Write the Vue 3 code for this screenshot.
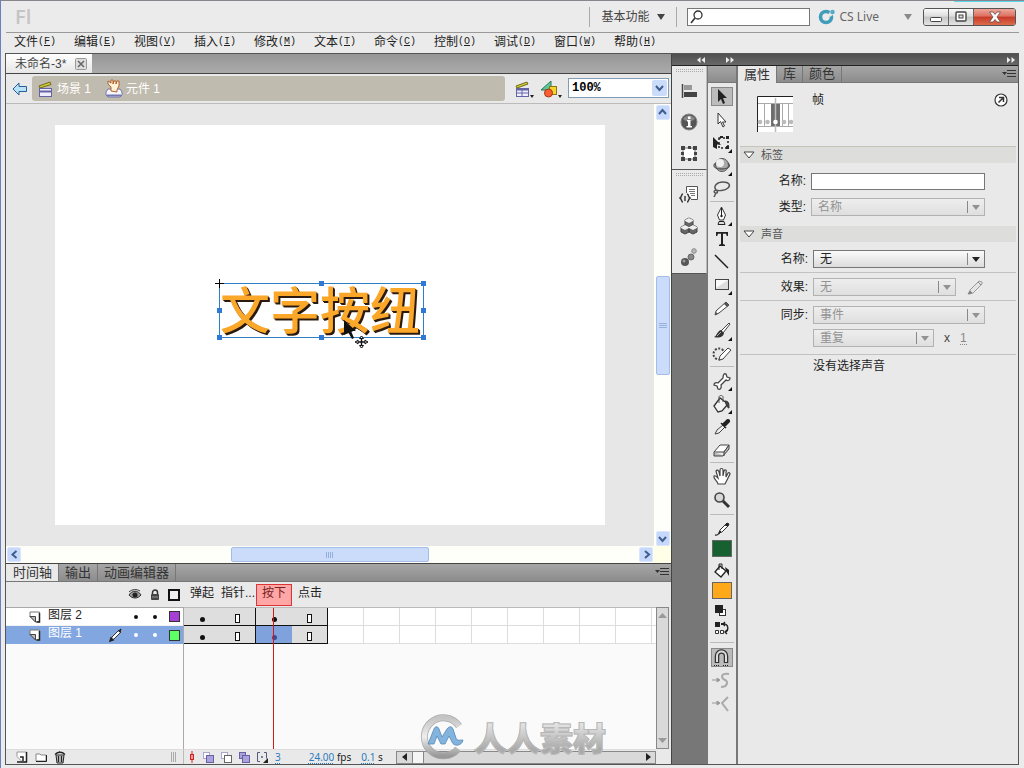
<script setup>
import { ref } from 'vue'

const menus = [
  ['文件', 'F'], ['编辑', 'E'], ['视图', 'V'], ['插入', 'I'], ['修改', 'M'], ['文本', 'T'],
  ['命令', 'C'], ['控制', 'O'], ['调试', 'D'], ['窗口', 'W'], ['帮助', 'H'],
]
const layers = ref([
  { name: '图层 2', color: '#a63fd6', selected: false },
  { name: '图层 1', color: '#5dff66', selected: true },
])
const states = ['弹起', '指针...', '按下', '点击']
const activeState = 2
const frameKinds = ['key', 'end', 'key', 'end']
const handles = ['tm', 'tr', 'ml', 'mr', 'bl', 'bm', 'br']
const query = ref('')
const frameLabel = ref('')
</script>

<template>
  <div class="window">
    <header class="titlebar">
      <span class="logo">Fl</span>
      <button class="workspace-btn">基本功能<svg width="8" height="6"><path d="M0 0h8L4 6z" fill="#444" /></svg></button>
      <label class="search">
        <svg width="14" height="14"><circle cx="8" cy="5" r="4" fill="none" stroke="#333" stroke-width="1.3" /><path d="M5 8L1 13" stroke="#333" stroke-width="1.6" /></svg>
        <input v-model="query" type="text" aria-label="搜索">
      </label>
      <button class="cslive">
        <svg width="18" height="18"><circle cx="8" cy="9" r="5.5" fill="none" stroke="#3f9dbb" stroke-width="3.6" /><path d="M10 7l3-5 3 4-4 3z" fill="#e9e9e9" /><circle cx="14.500" cy="4" r="2.300" fill="#5aaac4" /></svg>
        <span>CS Live</span>
        <svg width="8" height="6"><path d="M0 0h8L4 6z" fill="#8a8a8a" /></svg>
      </button>
      <div class="winbtns">
        <button aria-label="最小化"><svg width="14" height="12"><rect x="1.5" y="6.500" width="11" height="4" rx="1" fill="#fff" stroke="#444" /></svg></button>
        <button aria-label="还原"><svg width="14" height="12"><rect x="2" y="1" width="10" height="9" rx="1" fill="#fff" stroke="#444" stroke-width="1.4" /><rect x="5" y="4" width="4" height="3" fill="#ddd" stroke="#444" /></svg></button>
        <button class="close" aria-label="关闭"><svg width="14" height="12"><path d="M1.500 1h3.500l2 2.500L9 1h3.500L9 6l3.500 5H9L7 8.500 5 11H1.500L5 6z" fill="#fff" stroke="#6b4a4a" stroke-width=".8" /></svg></button>
      </div>
    </header>

    <nav class="menubar">
      <button v-for="[name, key] in menus" :key="key">{{ name }}<span class="key">(<u>{{ key }}</u>)</span></button>
    </nav>

    <div class="workspace">
      <main class="editor">
        <div class="doc-tabs">
          <div class="doc-tab">未命名-3*<button class="tab-close" aria-label="关闭文档"><svg width="12" height="12"><rect x=".5" y=".5" width="11" height="11" rx="1" fill="#ddd" stroke="#999" /><path d="M3 3l6 6M9 3l-6 6" stroke="#666" stroke-width="1.500" /></svg></button></div>
        </div>

        <div class="editbar">
          <button class="back" aria-label="返回"><svg width="16" height="14"><path d="M1 7l6-6v3.500h7.500v5H7V13z" fill="#b8e2f8" stroke="#245f96" /></svg></button>
          <div class="crumbs">
            <button>
              <svg width="16" height="18"><rect x="1.500" y="8.500" width="12" height="8" fill="#eef" stroke="#6464a4" /><path d="M1 11.500h13" stroke="#6464a4" stroke-width="2" /><path d="M1 6l11-4 1 2.500L2 8z" fill="#d3cc3c" stroke="#6d6b18" /></svg>
              场景 1
            </button>
            <button>
              <svg width="18" height="19"><path d="M3 10h12l2 3v3l-2 2H3l-2-2v-3z" fill="#f5f7ff" stroke="#7777b0" /><path d="M2 16.500h14" stroke="#7777b0" stroke-width="2" /><path d="M6 12V8L3 5V2l3 2V1h2v4l1-3h2v3l1-3h2v5l-2 4v2z" fill="#fff0d8" stroke="#b0622c" /></svg>
              元件 1
            </button>
          </div>
          <button class="pick" aria-label="编辑场景"><svg width="20" height="18"><rect x="2.500" y="8.500" width="12" height="8" fill="#eef" stroke="#6464a4" /><path d="M2 9.500h13" stroke="#6464a4" stroke-width="2" /><path d="M3 13h11M8 10v6" stroke="#6464a4" /><path d="M2 6l11-4 1 2L3 8z" fill="#d3cc3c" stroke="#6d6b18" /><path d="M16 15h4l-2 3z" fill="#222" /></svg></button>
          <button class="pick" aria-label="编辑元件"><svg width="22" height="18"><path d="M1 10L11 1v9z" fill="#5cc79a" stroke="#26775a" /><rect x="9.500" y="6.500" width="7" height="8" fill="#f5d42e" stroke="#927511" /><circle cx="8.500" cy="13" r="4" fill="#fa5f32" stroke="#a33a18" /><path d="M18 15h4l-2 3z" fill="#222" /></svg></button>
          <div class="zoom">
            <select aria-label="缩放比例"><option>100%</option></select>
            <svg width="15" height="16"><rect width="15" height="16" rx="2" fill="#cbdcfb" /><path d="M4 6l3.500 4L11 6" fill="none" stroke="#3f5d8c" stroke-width="2" /></svg>
          </div>
        </div>

        <section class="stage-area">
          <div class="pasteboard">
            <div class="canvas">
              <div class="text-object">
                文字按纽
                <i v-for="h in handles" :key="h" :class="['handle', h]"></i>
                <svg class="origin" width="9" height="9"><path d="M4.500 0v9M0 4.500h9" stroke="#000" /></svg>
                <svg class="pointer" width="24" height="29"><path d="M0 0v15l4-3 4 7 2-1-3-7h5z" fill="#111" /><path d="M17.500 16v12M11 22h13" stroke="#111" stroke-width="1.400" /><path d="M15.500 18.500l2-2.500 2 2.500zM15.500 25.500l2 2.500 2-2.500zM14 20l-2.500 2 2.500 2zM21 20l2.500 2-2.500 2z" fill="#fff" stroke="#111" /></svg>
              </div>
            </div>
          </div>
          <div class="xp-scroll vertical">
            <button aria-label="向上"><svg width="13" height="15"><path d="M3 9l3.500-4L10 9" /></svg></button>
            <div class="track"><div class="thumb"></div></div>
            <button aria-label="向下"><svg width="13" height="15"><path d="M3 6l3.500 4L10 6" /></svg></button>
          </div>
          <div class="xp-scroll horizontal">
            <button aria-label="向左"><svg width="13" height="15"><path d="M8.500 4L4.500 7.500l4 3.500" /></svg></button>
            <div class="track"><div class="thumb"></div></div>
            <button aria-label="向右"><svg width="13" height="15"><path d="M5 4l4 3.500L5 11" /></svg></button>
          </div>
          <div class="corner"></div>
        </section>

        <section class="timeline">
          <div class="panel-tabs">
            <button class="active">时间轴</button><button>输出</button><button>动画编辑器</button>
            <svg class="panel-menu" width="14" height="8"><path d="M0 2h5L2.500 5z" fill="#333" /><path d="M5 .5h9M5 3.500h9M5 6.500h9" stroke="#333" /></svg>
          </div>
          <div class="tl-grid">
            <div class="layer-head">
              <svg width="14" height="12"><path d="M1 6c3-5 9-5 12 0-3 4-9 4-12 0z" fill="#999" stroke="#333" /><circle cx="7" cy="6" r="2.500" fill="#222" /><path d="M1 3c3-3 8-3 11-1" fill="none" stroke="#333" /></svg>
              <svg width="10" height="12"><path d="M2.500 6V3.500a2.500 2.500 0 015 0V6" fill="none" stroke="#333" stroke-width="1.500" /><rect x="1" y="5" width="8" height="6" rx="1" fill="#444" /><path d="M2 8h6" stroke="#999" /></svg>
              <svg width="12" height="12"><rect x="1" y="1" width="10" height="10" fill="#eee" stroke="#111" stroke-width="2" /></svg>
            </div>
            <div class="state-head">
              <span v-for="(s, i) in states" :key="s" :class="{ current: i === activeState }">{{ s }}</span>
            </div>
            <div class="layers">
              <div v-for="l in layers" :key="l.name" :class="['layer', { selected: l.selected }]">
                <svg width="12" height="12"><path d="M1 1h9.500v10H6.500L1 5.500z" fill="#fff" stroke="#777" /><path d="M1 5.500h5.500V11z" fill="#bbb" stroke="#444" /><path d="M10.500 2v9h-3" stroke="#222" stroke-width="1.500" fill="none" /></svg>
                <span class="layer-name">{{ l.name }}</span>
                <svg class="layer-pencil" width="14" height="14"><g v-if="l.selected"><path d="M2 12l1-3 7-7 2 2-7 7z" fill="#fff" stroke="#333" /><path d="M1 13l3-1-2-2zM10 4l2-3" stroke="#222" fill="#222" stroke-width="1.500" /></g></svg>
                <i class="dot"></i><i class="dot"></i>
                <i class="chip" :style="{ background: l.color }"></i>
              </div>
            </div>
            <div class="frames">
              <div v-for="l in layers" :key="l.name" class="frame-row">
                <div v-for="(k, i) in frameKinds" :key="i" :class="['frame', k, { hot: l.selected && i === activeState }]"><i></i></div>
                <div class="empty-frames"></div>
              </div>
              <div class="playhead"></div>
            </div>
            <div class="gray-scroll v">
              <svg width="9" height="6"><path d="M0 6h9L4.500 1z" fill="#999" /></svg>
              <svg width="9" height="6"><path d="M0 0h9L4.500 5z" fill="#999" /></svg>
            </div>
            <div class="layer-foot">
              <button aria-label="新建图层"><svg width="12" height="12"><path d="M1 1h9.500v10H6.500L1 5.500z" fill="#fff" stroke="#999" /><path d="M4 6h3v4M10.500 1v10H1" fill="none" stroke="#222" stroke-width="1.500" /></svg></button>
              <button aria-label="新建文件夹"><svg width="12" height="12"><path d="M1 3h4l1 1h5v6H1z" fill="#fff" stroke="#888" /><path d="M1 10.500h10.500V4" fill="none" stroke="#222" /></svg></button>
              <button aria-label="删除"><svg width="12" height="13"><path d="M2 4h8l-1 8H3z" fill="#ccc" stroke="#222" /><path d="M1 3.500c3-3 7-3 10 0M4.500 5v6M7.500 5v6M4 2l2-1" fill="none" stroke="#222" stroke-width="1.300" /></svg></button>
              <svg class="foot-grip" width="6" height="10"><path d="M.5 0v10M2.500 0v10M4.500 0v10" stroke="#aaa" /></svg>
            </div>
            <div class="frame-foot">
              <svg width="8" height="12"><path d="M4 0v12" stroke="#d22" /><rect x="2.500" y="3.500" width="3" height="5" fill="#f99" stroke="#c22" /></svg>
              <svg width="11" height="11"><rect x=".5" y=".5" width="6" height="6" fill="#fff" stroke="#aaa6cc" /><rect x="3.500" y="3.500" width="7" height="7" fill="#aaa2da" stroke="#6862a4" /></svg>
              <svg width="11" height="11"><rect x=".5" y=".5" width="6" height="6" fill="#fff" stroke="#aaa6cc" /><rect x="3.500" y="3.500" width="7" height="7" fill="#fff" stroke="#666" /></svg>
              <svg width="11" height="11"><rect x=".5" y=".5" width="6" height="6" fill="#aaa2da" stroke="#6862a4" /><rect x="3.500" y="3.500" width="7" height="7" fill="#aaa2da" stroke="#6862a4" /></svg>
              <svg width="11" height="11"><path d="M3 .5H.5v9H3M7 .5h2.500v6" fill="none" stroke="#555a80" /><circle cx="5" cy="5" r="1" fill="#555a80" /><path d="M6 11h5V6z" fill="#222" /></svg>
              <a class="fno" href="#">3</a>
              <span class="fps"><a href="#">24.00</a> fps</span>
              <span class="secs"><a href="#">0.1</a> s</span>
              <div class="gray-scroll h">
                <button aria-label="左"><svg width="5" height="8"><path d="M5 0v8L0 4z" fill="#222" /></svg></button>
                <i></i>
                <svg width="5" height="8"><path d="M0 0v8l5-4z" fill="#222" /></svg>
              </div>
            </div>
          </div>
          <div class="watermark">
            <svg width="46" height="46">
              <defs><linearGradient id="ring" x2="0" y2="1"><stop stop-color="#c4c4c4" /><stop offset=".5" stop-color="#eee" /><stop offset="1" stop-color="#999" /></linearGradient></defs>
              <path d="M39 12A19 19 0 1 0 38 35" fill="none" stroke="#aaa" stroke-width="7" /><path d="M39 12A19 19 0 1 0 38 35" fill="none" stroke="url(#ring)" stroke-width="5.500" />
              <path d="M8 30l6-15c1-3 4-3 5 0l3 8 5-8c2-3 5-3 6 0l3 9c1 3 4 2 7 2-1 6-9 7-11 2l-3-6-4 8h-4l-4-8-3 8z" fill="#82b4de" stroke="#5688b6" stroke-width=".8" />
            </svg>
            <span>人人素材</span>
          </div>
        </section>
      </main>

      <aside class="dock">
        <div class="dock-head">
          <svg width="8" height="6"><path d="M3.500 0v6L0 3zM8 0v6L4.500 3z" fill="#eee" /></svg>
          <svg width="8" height="6"><path d="M0 0v6l3.500-3zM4.500 0v6L8 3z" fill="#eee" /></svg>
          <svg width="8" height="6"><path d="M0 0v6l3.500-3zM4.500 0v6L8 3z" fill="#eee" /></svg>
        </div>
        <div class="dock-body">
          <div class="icon-panels">
            <div class="icon-group">
              <i class="gripper"></i>
              <button aria-label="对齐"><svg width="18" height="18"><path d="M2.500 2v14" stroke="#444" stroke-width="1.500" /><rect x="4" y="3" width="8" height="5" fill="#999" /><rect x="4" y="10" width="13" height="5" fill="#444" /></svg></button>
              <button aria-label="信息"><svg width="18" height="18"><circle cx="9" cy="9" r="8" fill="#555" stroke="#888" /><path d="M3 6a7 7 0 0112 0c-3 3-9 3-12 0z" fill="#888" /><path d="M7 7h3.500v6H12v1.500H6.500V13H8V8.500H7zM8 3.500h2.500V6H8z" fill="#fff" /></svg></button>
              <button aria-label="变形"><svg width="18" height="18"><rect x="3" y="4" width="12" height="11" fill="#fff" stroke="#777" /><path d="M1 2h4v4H1zM13 2h4v4h-4zM1 13h4v4H1zM13 13h4v4h-4zM8 2h3v3H8zM8 14h3v3H8zM1 8h3v3H1zM14 8h3v3h-3z" fill="#444" /></svg></button>
            </div>
            <div class="icon-group">
              <i class="gripper"></i>
              <button aria-label="代码片断"><svg width="20" height="20"><path d="M7.500 8V1.500h11v13H12" fill="#fff" stroke="#555" /><path d="M10 4.500h6M10 6.500h6M11 8.500h5M12 10.500h4" stroke="#777" /><path d="M4 9c-2 0-1 3-3 4 2 1 1 4 3 4M8 9c2 0 1 3 3 4-2 1-1 4-3 4M6 11v5" fill="none" stroke="#333" stroke-width="1.400" /></svg></button>
              <button aria-label="组件"><svg width="20" height="20"><path d="M6 4l4-2 4 2v5l-4 2-4-2zM2 11l4-2 4 2v5l-4 2-4-2zM10 11l4-2 4 2v5l-4 2-4-2z" fill="#666" stroke="#444" /><path d="M6 4l4-2 4 2v1l-4 2-4-2zM2 11l4-2 4 2v1l-4 2-4-2zM10 11l4-2 4 2v1l-4 2-4-2z" fill="#eee" /></svg></button>
              <button aria-label="动画预设"><svg width="18" height="18"><circle cx="5" cy="14" r="4" fill="#555" /><circle cx="11" cy="9" r="3" fill="#888" stroke="#666" /><circle cx="14" cy="3" r="2.300" fill="#bbb" stroke="#888" /><circle cx="4" cy="13" r="1.500" fill="#999" /></svg></button>
            </div>
          </div>

          <div class="tools">
            <div class="tools-cap"></div>
            <div class="tool-group">
              <button class="on" aria-label="选择"><svg viewBox="0 0 22 20"><path d="M7 2v13l3-3 2 5 2-1-2-5h4z" fill="#222" /></svg></button>
              <button aria-label="部分选取"><svg viewBox="0 0 22 20"><path d="M7 3v11l2.500-2.500L12 17l1.500-1-2-4H15z" fill="#fff" stroke="#333" /></svg></button>
              <button aria-label="任意变形"><svg viewBox="0 0 22 20"><path d="M2 4l8 8-4-.5V16l-4-2z" fill="#222" /><path d="M8 5h9v10H8z" fill="none" stroke="#222" stroke-width="1.500" stroke-dasharray="2 2" /><path d="M15 3h3v3h-3zM15 13h3v3h-3zM9 3h3v2H9z" fill="#222" /><path d="M21 16v4h-4z" fill="#111" /></svg></button>
              <button aria-label="3D 旋转"><svg viewBox="0 0 22 20"><circle cx="11" cy="9" r="6.500" fill="#aaa" stroke="#555" /><circle cx="9" cy="7" r="4" fill="#f0f0f0" /><path d="M5 7c-4 2-2 6 5 6 8 0 10-3 7-6" fill="none" stroke="#555" stroke-width="1.300" /><path d="M21 16v4h-4z" fill="#111" /></svg></button>
              <button aria-label="套索"><svg viewBox="0 0 22 20"><path d="M5 11C2 7 6 3 12 3s8 3 5 6-10 3-12 2c-3 1-2 3 0 3s2-2 0-3M5 14l-2 4" fill="none" stroke="#555" stroke-width="1.500" /></svg></button>
            </div>
            <div class="tool-group">
              <button aria-label="钢笔"><svg viewBox="0 0 22 20"><path d="M10.500 1l4 8-2 5h-4l-2-5z" fill="#fff" stroke="#333" /><path d="M10.500 2v8" stroke="#222" /><circle cx="10.500" cy="10" r="1.200" fill="#222" /><path d="M8 15.500h5l1 3H7z" fill="#ddd" stroke="#222" /><path d="M21 16v4h-4z" fill="#111" /></svg></button>
              <button aria-label="文本"><svg viewBox="0 0 22 20"><path d="M5 3h12v4h-1.200L15 4.800h-3V15l2 .8V17H8v-1.200l2-.8V4.800H7L6.200 7H5z" fill="#222" /></svg></button>
              <button aria-label="线条"><svg viewBox="0 0 22 20"><path d="M4 3l13 13" stroke="#222" stroke-width="1.500" /></svg></button>
              <button aria-label="矩形"><svg viewBox="0 0 22 20"><rect x="4.500" y="4.500" width="13" height="10" fill="#ddd" stroke="#444" /><path d="M5 5h12L5 13z" fill="#fafafa" /><path d="M21 16v4h-4z" fill="#111" /></svg></button>
              <button aria-label="铅笔"><svg viewBox="0 0 22 20"><path d="M4 17l1-4L15 4l3 3-10 8z" fill="#fff" stroke="#444" /><path d="M4 17l3-1-2-2zM13 6l3 3 2-2-3-3z" fill="#555" /></svg></button>
              <button aria-label="刷子"><svg viewBox="0 0 22 20"><path d="M18 2l-8 8 2 2 7-9z" fill="#fff" stroke="#444" /><path d="M10 9l3 3c-1 5-6 5-10 4 3-1 3-6 7-7z" fill="#333" /><path d="M6 15l4-4" stroke="#aaa" /><path d="M21 16v4h-4z" fill="#111" /></svg></button>
              <button aria-label="Deco"><svg viewBox="0 0 22 20"><circle cx="8" cy="10" r="5.500" fill="none" stroke="#444" stroke-width="2" stroke-dasharray="2 1.500" /><path d="M8 16l1-4 8-8 3 2-8 9z" fill="#fff" stroke="#444" /></svg></button>
            </div>
            <div class="tool-group">
              <button aria-label="骨骼"><svg viewBox="0 0 22 20"><path d="M12 7c0-3 1-5 3-4l1 3 3 1c0 3-3 3-4 2l-5 5c1 3-1 5-3 4l-1-3-3-1c0-2 2-3 4-2z" fill="#fff" stroke="#444" stroke-width="1.300" /><path d="M21 16v4h-4z" fill="#111" /></svg></button>
              <button aria-label="颜料桶"><svg viewBox="0 0 22 20"><path d="M3 12l6-8 8 6-6 7-4 1z" fill="#f2f2f2" stroke="#333" stroke-width="1.300" /><path d="M8 9V3c0-2 4-2 4 0v5" fill="none" stroke="#555" /><path d="M14 7c4 0 4 3 4 7-2 0-3-4-4-7z" fill="#444" stroke="#333" /><path d="M21 16v4h-4z" fill="#111" /></svg></button>
              <button aria-label="滴管"><svg viewBox="0 0 22 20"><path d="M4 17l2-4 6-5 2 2-6 6z" fill="#eee" stroke="#444" /><path d="M10 6l5 5M12 7l4-4c2-1 3 1 2 2l-4 4z" fill="#222" stroke="#222" stroke-width="1.500" /></svg></button>
              <button aria-label="橡皮擦"><svg viewBox="0 0 22 20"><path d="M3 12l6-7h9l-5 7z" fill="#fff" stroke="#444" /><path d="M3 12v4h9l6-7V5l-5 7v4" fill="#bbb" stroke="#444" /></svg></button>
            </div>
            <div class="tool-group wide">
              <button aria-label="手形"><svg viewBox="0 0 22 20"><path d="M7 17c0-3-5-5-4-8 1-1 3 1 4 2L5 4c1-2 3 0 3 1l1 4V3c0-2 3-2 3 0v6l1-5c1-2 3-1 2 1v5l2-4c1-1 2 0 2 1l-3 6-2 4z" fill="#fff" stroke="#444" stroke-width="1.200" /></svg></button>
              <button aria-label="缩放"><svg viewBox="0 0 22 20"><circle cx="8.500" cy="7.500" r="4.500" fill="#d8d8d8" stroke="#444" stroke-width="1.600" /><path d="M12 11l6 6" stroke="#333" stroke-width="3" /></svg></button>
            </div>
            <div class="tool-group colors">
              <button aria-label="笔触颜色"><svg viewBox="0 0 22 20"><path d="M4 16c4 1 3-2 5-2" fill="none" stroke="#333" stroke-width="1.300" /><path d="M8 14l1-3 6-6 2 2-6 6z" fill="#fff" stroke="#333" /><path d="M8 14l2-1-1-1zM14 6l2-2 2 1-1 2z" fill="#222" stroke="#222" /></svg></button>
              <button class="swatch green" aria-label="笔触"></button>
              <button aria-label="填充颜色"><svg viewBox="0 0 22 20"><path d="M4 11l5-6 6 5-5 6z" fill="#fff" stroke="#222" stroke-width="1.300" /><path d="M8 9V3h3v5" fill="none" stroke="#222" /><path d="M14 6l4 3v6l-3-5z" fill="#222" /></svg></button>
              <button class="swatch orange" aria-label="填充"></button>
              <button class="short" aria-label="黑白"><svg viewBox="0 0 22 20"><rect x="8.500" y="8.500" width="6" height="6" fill="#fff" stroke="#333" /><path d="M4 4h8v8H4z" fill="#222" /></svg></button>
              <button class="short" aria-label="交换颜色"><svg viewBox="0 0 22 20"><path d="M4 3h5v5H4zM10 4h2v2h-2z" fill="#222" /><path d="M4.500 11.500h3v3h-3zM9.500 11.500h3v3h-3z" fill="#fff" stroke="#333" /><path d="M12 5c6-1 6 7 2 8M14 3l-2 2 2 2M16 11l-2 2 2 2" fill="none" stroke="#222" stroke-width="1.400" /></svg></button>
            </div>
            <div class="tool-group last">
              <button class="on" aria-label="贴紧至对象"><svg viewBox="0 0 22 20"><path d="M6 15V8c0-6 9-6 9 0v7" fill="none" stroke="#333" stroke-width="4.500" /><path d="M6 14V8c0-6 9-6 9 0v6" fill="none" stroke="#ddd" stroke-width="2" /><path d="M3 17.500h6M12 17.500h6" stroke="#222" stroke-dasharray="1 1" /></svg></button>
              <button aria-label="平滑"><svg viewBox="0 0 22 20"><path d="M1 9h6M6 7l3 2-3 2z" fill="#999" stroke="#999" /><path d="M18 3c-9-1-8 4-4 6s2 7-4 7" fill="none" stroke="#aaa" stroke-width="2" /></svg></button>
              <button aria-label="伸直"><svg viewBox="0 0 22 20"><path d="M1 9h6M6 7l3 2-3 2z" fill="#999" stroke="#999" /><path d="M17 3l-6 6 6 8" fill="none" stroke="#aaa" stroke-width="2" /></svg></button>
            </div>
          </div>

          <div class="props">
            <div class="panel-tabs">
              <button class="active">属性</button><button>库</button><button>颜色</button>
              <svg class="panel-menu" width="14" height="8"><path d="M0 2h5L2.500 5z" fill="#333" /><path d="M5 .5h9M5 3.500h9M5 6.500h9" stroke="#333" /></svg>
            </div>
            <div class="prop-head">
              <svg width="36" height="36"><rect width="36" height="36" fill="#fff" /><path d="M.5 36V.5H36" fill="none" stroke="#222" /><path d="M1 7.500h35M1 30.500h35M7.500 8v22M25.500 8v22M31.500 8v22" stroke="#aaa" /><rect x="14" y="8" width="9" height="22" fill="#6e6e6e" /><path d="M18.500 2v34" stroke="#bbb" stroke-width="1.500" /><g fill="#bbb"><circle cx="3" cy="26" r="2.300" /><circle cx="10.500" cy="26" r="2.300" /><circle cx="27" cy="26" r="2.300" /><circle cx="34" cy="26" r="2.300" /></g><circle cx="18.500" cy="26" r="2.300" fill="#fff" /></svg>
              <h2>帧</h2>
              <button class="help" aria-label="帮助"><svg width="14" height="14"><circle cx="7" cy="7" r="6" fill="#fff" stroke="#333" stroke-width="1.200" /><path d="M4.500 9.500L9 5M5 4.500h4.500V9" fill="none" stroke="#333" stroke-width="1.500" /></svg></button>
            </div>
            <h3 class="ruled"><svg width="12" height="8"><path d="M1 1h10L6 7z" fill="#fff" stroke="#444" /></svg>标签</h3>
            <div class="fields">
              <div class="field"><label for="lname">名称:</label><input id="lname" v-model="frameLabel" type="text"></div>
              <div class="field"><label for="ltype">类型:</label><div class="combo off"><select id="ltype" disabled><option>名称</option></select></div></div>
            </div>
            <h3><svg width="12" height="8"><path d="M1 1h10L6 7z" fill="#fff" stroke="#444" /></svg>声音</h3>
            <div class="sound">
              <div class="field first"><label for="sname">名称:</label><div class="combo"><select id="sname"><option>无</option></select></div></div>
              <div class="field"><label for="effect">效果:</label><div class="combo off medium"><select id="effect" disabled><option>无</option></select></div>
                <svg class="edit" width="16" height="16"><path d="M2 15l1-4L12 2l3 1v2l-9 9z" fill="#e4e4e4" stroke="#999" /><path d="M1 15l4-1-2-2zM11 3l3 3" fill="#777" stroke="#888" /></svg></div>
              <div class="sync">
                <div class="field"><label for="sync">同步:</label><div class="combo off"><select id="sync" disabled><option>事件</option></select></div></div>
                <div class="field"><span class="blank"></span><div class="combo off small"><select aria-label="循环" disabled><option>重复</option></select></div><span class="times">x</span><span class="count">1</span></div>
              </div>
              <p>没有选择声音</p>
            </div>
          </div>
        </div>
      </aside>
    </div>
  </div>
</template>

<style>
body { background: #e9e9e9; }
</style>

<style scoped>
* { box-sizing: border-box; }
button { appearance: none; border: 0; background: none; padding: 0; margin: 0; font: inherit; color: inherit; display: flex; align-items: center; justify-content: center; white-space: nowrap; }
svg { display: block; flex: none; }
h2, h3, p { margin: 0; font-weight: normal; }
i { display: block; }
.window { position: relative; height: 100vh; min-height: 760px; display: flex; flex-direction: column; padding: 0 5px 3px; border-top: 1px solid #88868c; border-left: 1px solid #6a7ec0; background: #ebebeb; color: #222; font: 12px/16px "Liberation Sans", "Noto Sans CJK SC", sans-serif; overflow: hidden; }
.window::after { content: ""; position: absolute; top: 0; right: 0; width: 70px; height: 1px; background: #5cd4ea; }

.titlebar { display: flex; align-items: center; height: 32px; border-bottom: 1px solid #999; padding-right: 3px; }
.logo { flex: 1; padding-left: 9px; font: 600 20px/20px "Open Sans", sans-serif; color: #c4c4c4; }
.workspace-btn { height: 20px; border: solid #aaa; border-width: 0 1px; width: 88px; gap: 8px; color: #444; }
.search { display: flex; align-items: center; margin-left: 10px; width: 123px; height: 18px; padding: 0 2px; border: 1px solid #777; background: #fff; }
.search input { flex: 1; min-width: 0; border: 0; outline: 0; background: none; }
.cslive { margin-left: 8px; gap: 3px; font-family: "Noto Sans", sans-serif; color: #666; }
.cslive svg:last-child { margin-left: 22px; }
.winbtns { display: flex; height: 18px; margin-left: 11px; border: 1px solid #555; border-radius: 3px; overflow: hidden; }
.winbtns button { width: 25px; background: linear-gradient(#fafafa, #ddd 45%, #c4c4c4 50%, #e4e4e4); border-right: 1px solid #666; }
.winbtns button.close { width: 41px; border: 0; background: linear-gradient(#eda79b, #dc6f60 45%, #c73a28 50%, #dc6c4a); }

.menubar { display: flex; gap: 18px; height: 20px; padding-left: 8px; }
.menubar .key { font: 10px/16px "Liberation Mono", monospace; }
.menubar button { width: 42px; height: 17px; }

.workspace { flex: 1; min-height: 0; display: flex; border: 1px solid #555; margin-left: -1px; }
.editor { flex: 1; min-width: 0; display: flex; flex-direction: column; background: #e9e9e9; }
.doc-tabs { display: flex; height: 20px; background: linear-gradient(#969696, #ababab); border-bottom: 1px solid #444; }
.doc-tab { display: flex; align-items: center; gap: 4px; width: 86px; padding-left: 9px; background: linear-gradient(#fff, #e6e6e6); color: #444; }
.doc-tab .tab-close { margin-left: auto; margin-right: 5px; }

.editbar { display: flex; align-items: center; height: 30px; padding: 0 2px 0 6px; border-bottom: 1px solid #bbb; }
.crumbs { flex: 1; display: flex; gap: 14px; margin: 0 9px 0 4px; padding-left: 6px; height: 25px; border-radius: 3px; background: #bfbbae; color: #fff; }
.crumbs button { gap: 3px; }
.pick { margin-right: 6px; }
.zoom { position: relative; width: 101px; height: 20px; margin-bottom: 2px; }
.zoom select { appearance: none; width: 100%; height: 100%; padding: 0 3px; border: 1px solid #7f9db9; border-radius: 0; background: #fff; font: bold 12px/16px "Liberation Mono", monospace; color: #000; }
.zoom svg { position: absolute; right: 2px; top: 2px; pointer-events: none; }

.stage-area { flex: 1; min-height: 0; display: grid; grid-template: minmax(0, 1fr) 17px / minmax(0, 1fr) 17px; background: #e7e7e7; }
.pasteboard { display: flex; align-items: center; justify-content: center; overflow: hidden; }
.canvas { position: relative; flex: none; width: 550px; height: 400px; background: #fff; }
.text-object { position: absolute; left: 164px; top: 158px; width: 205px; height: 55px; border: 1px solid #2f7fc4; white-space: nowrap; font: 500 50px/46px "Noto Sans CJK SC", sans-serif; color: #fba82a; text-shadow: 1px 1px #2a1a10, 2px 2px #2a1a10; }
.handle { position: absolute; width: 5px; height: 5px; background: #2f78d4; }
.handle.tm, .handle.tr { top: -3px; }
.handle.tm, .handle.bm { left: 99px; }
.handle.tr, .handle.mr, .handle.br { right: -3px; }
.handle.ml, .handle.bl { left: -3px; }
.handle.ml, .handle.mr { top: 24px; }
.handle.bl, .handle.bm, .handle.br { bottom: -3px; }
.origin { position: absolute; left: -5px; top: -5px; }
.pointer { position: absolute; left: 124px; top: 36px; overflow: visible; }
.xp-scroll { display: flex; background: #fffffa; }
.xp-scroll.vertical { flex-direction: column; align-items: center; padding: 1px 1px 0; }
.xp-scroll.horizontal { align-items: center; padding: 0 1px; }
.xp-scroll button { width: 14px; height: 15px; border: 1px solid #dbe6fb; border-radius: 2px; background: #c6d8fb; }
.xp-scroll path { fill: none; stroke: #3f5d8c; stroke-width: 2; }
.track { flex: 1; display: flex; align-items: center; justify-content: center; }
.vertical .track { flex-direction: column; width: 100%; min-height: 0; }
.thumb { border: 1px solid #a3bce8; border-radius: 2px; background: #cbdcfb; display: flex; align-items: center; justify-content: center; }
.horizontal .thumb { width: 32%; height: 15px; }
.vertical .thumb { width: 14px; height: 24%; }
.thumb::after { content: ""; width: 8px; height: 6px; background: repeating-linear-gradient(90deg, #96b0de 0 1px, transparent 1px 2px); }
.vertical .thumb::after { background: repeating-linear-gradient(#96b0de 0 1px, transparent 1px 2px); }
.corner { background: #fffee6; }

.panel-tabs { display: flex; height: 17px; background: linear-gradient(#a6a6a6, #8c8c8c); border-bottom: 1px solid #777; font-size: 13px; color: #333; }
.panel-tabs button { padding: 0 6px; border-right: 1px solid #777; }
.panel-tabs .active { background: #e9e9e9; height: 17px; }
.panel-menu { margin: 4px 2px 0 auto; }

.timeline { position: relative; border-top: 1px solid #444; }
.timeline .panel-tabs { height: 18px; }
.timeline .panel-tabs .active { padding-left: 7px; }
.tl-grid { display: grid; grid-template: 25px 142px 15px / 178px minmax(0, 1fr) 13px; padding-right: 2px; }
.layer-head { display: flex; align-items: center; justify-content: flex-end; gap: 8px; padding-right: 4px; }
.state-head { grid-column: 2 / -1; display: flex; padding-top: 2px; }
.state-head span { width: 36px; height: 22px; line-height: 16px; text-align: center; white-space: nowrap; border: 1px solid transparent; }
.state-head .current { border-color: #d33; background: #ffa6a6; color: #722; }
.layers { grid-column: 1; background: #fafafa; border-right: 1px solid #aaa; border-top: 1px solid #aaa; }
.layer { display: flex; align-items: center; height: 18px; background: #fff; padding: 0 3px 0 23px; border-bottom: 1px solid #f2f2f2; }
.layer.selected { background: #82a6e0; color: #fff; border: 0; }
.layer-name { flex: 1; padding: 0 0 4px 7px; white-space: nowrap; line-height: 14px; }
.layer-pencil { margin-right: 11px; }
.dot { width: 4px; height: 4px; border-radius: 2px; background: #111; margin-right: 15px; }
.layer.selected .dot { background: #fff; }
.chip { width: 11px; height: 11px; border: 1px solid #333; margin-left: -3px; }
.frames { position: relative; overflow: hidden; background: #fafafa; border-top: 1px solid #bbb; }
.frame-row { display: flex; height: 18px; }
.frame { width: 36px; background: #dedede; border-bottom: 1px solid #111; display: flex; justify-content: center; align-items: flex-end; }
.frame.end { border-right: 1px solid #111; }
.frame.hot { background: #7fa2dc; }
.frame.key i { width: 5px; height: 5px; border-radius: 3px; background: #111; margin-bottom: 3px; }
.frame.hot.key i { background: #444a88; }
.frame.end i { width: 5px; height: 9px; border: 1px solid #111; margin-bottom: 2px; background: #fff; }
.empty-frames { flex: 1; background: repeating-linear-gradient(90deg, #fff 0 35px, #ddd 35px 36px); border-bottom: 1px solid #ddd; }
.playhead { position: absolute; left: 89px; top: 0; bottom: 0; width: 1px; background: #d81414; }
.gray-scroll { border: 1px solid #888; background: #d9d9d9; display: flex; align-items: center; justify-content: space-between; }
.gray-scroll.v { flex-direction: column; padding: 4px 0; }
.gray-scroll.h { flex: 1; height: 13px; margin-left: 6px; padding-right: 4px; }
.gray-scroll.h button { width: 15px; height: 100%; }
.gray-scroll.h i { width: 12px; height: 11px; background: #f5f5f5; border: solid #888; border-width: 0 1px; margin-right: auto; }
.layer-foot, .frame-foot { display: flex; align-items: center; border-top: 1px solid #ddd; }
.layer-foot { padding-left: 10px; gap: 7px; border-right: 1px solid #bbb; }
.foot-grip { margin-left: auto; margin-right: 6px; }
.frame-foot { padding-left: 4px; gap: 7px; font: 10px/11px "Noto Sans", sans-serif; white-space: nowrap; }
.frame-foot a { color: #2c7cc0; text-decoration: underline dotted; text-underline-offset: 2px; }
.fps { margin-left: 21px; }
.secs { margin-left: 3px; }
.watermark { position: absolute; left: 414px; bottom: 4px; display: flex; align-items: center; gap: 8px; pointer-events: none; }
.watermark span { font: 900 33px/40px "Noto Sans CJK SC", sans-serif; color: transparent; background: linear-gradient(#e2e2e2 20%, #aaa 80%); background-clip: text; -webkit-text-stroke: 1px #b8b8b8; }

.dock { flex: none; width: 35%; max-width: 347px; display: flex; flex-direction: column; background: #777; border-left: 1px solid #444; }
.dock-head { display: flex; align-items: center; height: 12px; background: linear-gradient(#505050, #686868); border-bottom: 1px solid #222; padding: 0 3px 0 25px; gap: 21px; }
.dock-head svg:last-child { margin-left: auto; }
.dock-body { flex: 1; min-height: 0; display: flex; gap: 1px; }
.icon-panels { width: 35px; }
.icon-group { display: flow-root; background: #e9e9e9; height: 104px; border-bottom: 1px solid #555; border-right: 1px solid #bbb; }
.icon-group button { width: 100%; height: 31px; }
.gripper { width: 28px; height: 4px; margin: 3px 3px 2px; background: conic-gradient(#aaa 25%, transparent 0) 0 0 / 2px 2px; }
.tools { width: 28px; background: #e9e9e9; }
.tools-cap { height: 17px; background: linear-gradient(#a6a6a6, #8c8c8c); border-bottom: 1px solid #777; margin-bottom: 4px; }
.tool-group { border-bottom: 1px solid #bbb; padding-bottom: 1px; margin: 0 2px 2px; }
.tool-group button { width: 24px; height: 23px; }
.tool-group button svg { width: 22px; height: 20px; }
.tool-group .on { width: 22px; height: 19px; margin: 2px 1px; border: 1px solid #888; background: #bbb; }
.tool-group.wide { padding-bottom: 3px; }
.tool-group .swatch { height: 17px; width: 20px; margin: 0 2px; border: 1px solid #666; }
.tool-group .green { background: #17602f; margin-bottom: 2px; }
.tool-group .orange { background: #ffa91a; margin-bottom: 3px; }
.tool-group .short { height: 18px; }
.tool-group.colors { padding-bottom: 4px; margin-bottom: 5px; }
.tool-group.last { border: 0; }

.props { flex: 1; min-width: 0; background: #e9e9e9; border-left: 1px solid #777; }
.prop-head { display: flex; align-items: flex-start; height: 63px; padding: 13px 10px 0 19px; gap: 19px; }
.prop-head h2 { flex: 1; font-size: 12px; line-height: 8px; }
.help { margin-top: -3px; }
h3 { display: flex; align-items: center; gap: 6px; height: 16px; margin: 0 2px; padding-left: 3px; background: #dddddb; font-size: 11px; color: #555; }
h3.ruled { border-top: 1px solid #c4c5b8; height: 17px; }
.field { display: flex; align-items: center; height: 18px; padding-right: 33px; }
.field label, .blank { width: 68px; margin-right: 5px; text-align: right; flex: none; }
.field input { flex: 1; min-width: 0; height: 17px; border: 1px solid #777; background: #fff; }
.fields { padding: 9px 0 10px; display: flex; flex-direction: column; gap: 8px; }
.combo { position: relative; flex: 1; min-width: 0; height: 18px; color: #222; }
.combo select { appearance: none; display: block; width: 100%; height: 18px; padding: 0 6px; border: 1px solid #777; border-radius: 0; background: linear-gradient(#fafafa, #dcdcdc); font: inherit; color: inherit; opacity: 1; }
.combo::before { content: ""; position: absolute; right: 17px; top: 3px; height: 12px; border-left: 1px solid #888; }
.combo::after { content: ""; position: absolute; right: 5px; top: 7px; border: solid transparent; border-width: 5px 4px 0; border-top-color: currentColor; pointer-events: none; }
.combo.off { color: #929292; }
.combo.off select { border-color: #b2b2b2; background: linear-gradient(#eee, #dfdfdf); }
.combo.medium { flex: 0 1 143px; }
.combo.small { flex: 0 1 121px; }
.sound > .field { height: 28px; border-bottom: 1px solid #c2c2c2; margin: 0 2px; padding-right: 31px; }
.sound > .field.first { height: 31px; padding-top: 4px; }
.edit { margin-left: 11px; }
.sync { border-bottom: 1px solid #c2c2c2; margin: 0 2px; padding: 5px 0 7px; display: flex; flex-direction: column; gap: 5px; }
.sync .field { padding-right: 31px; }
.times { margin-left: 10px; color: #444; }
.count { margin-left: 10px; line-height: 12px; color: #888; border-bottom: 1px dotted #888; }
.sound p { padding: 3px 0 0 75px; }
</style>
